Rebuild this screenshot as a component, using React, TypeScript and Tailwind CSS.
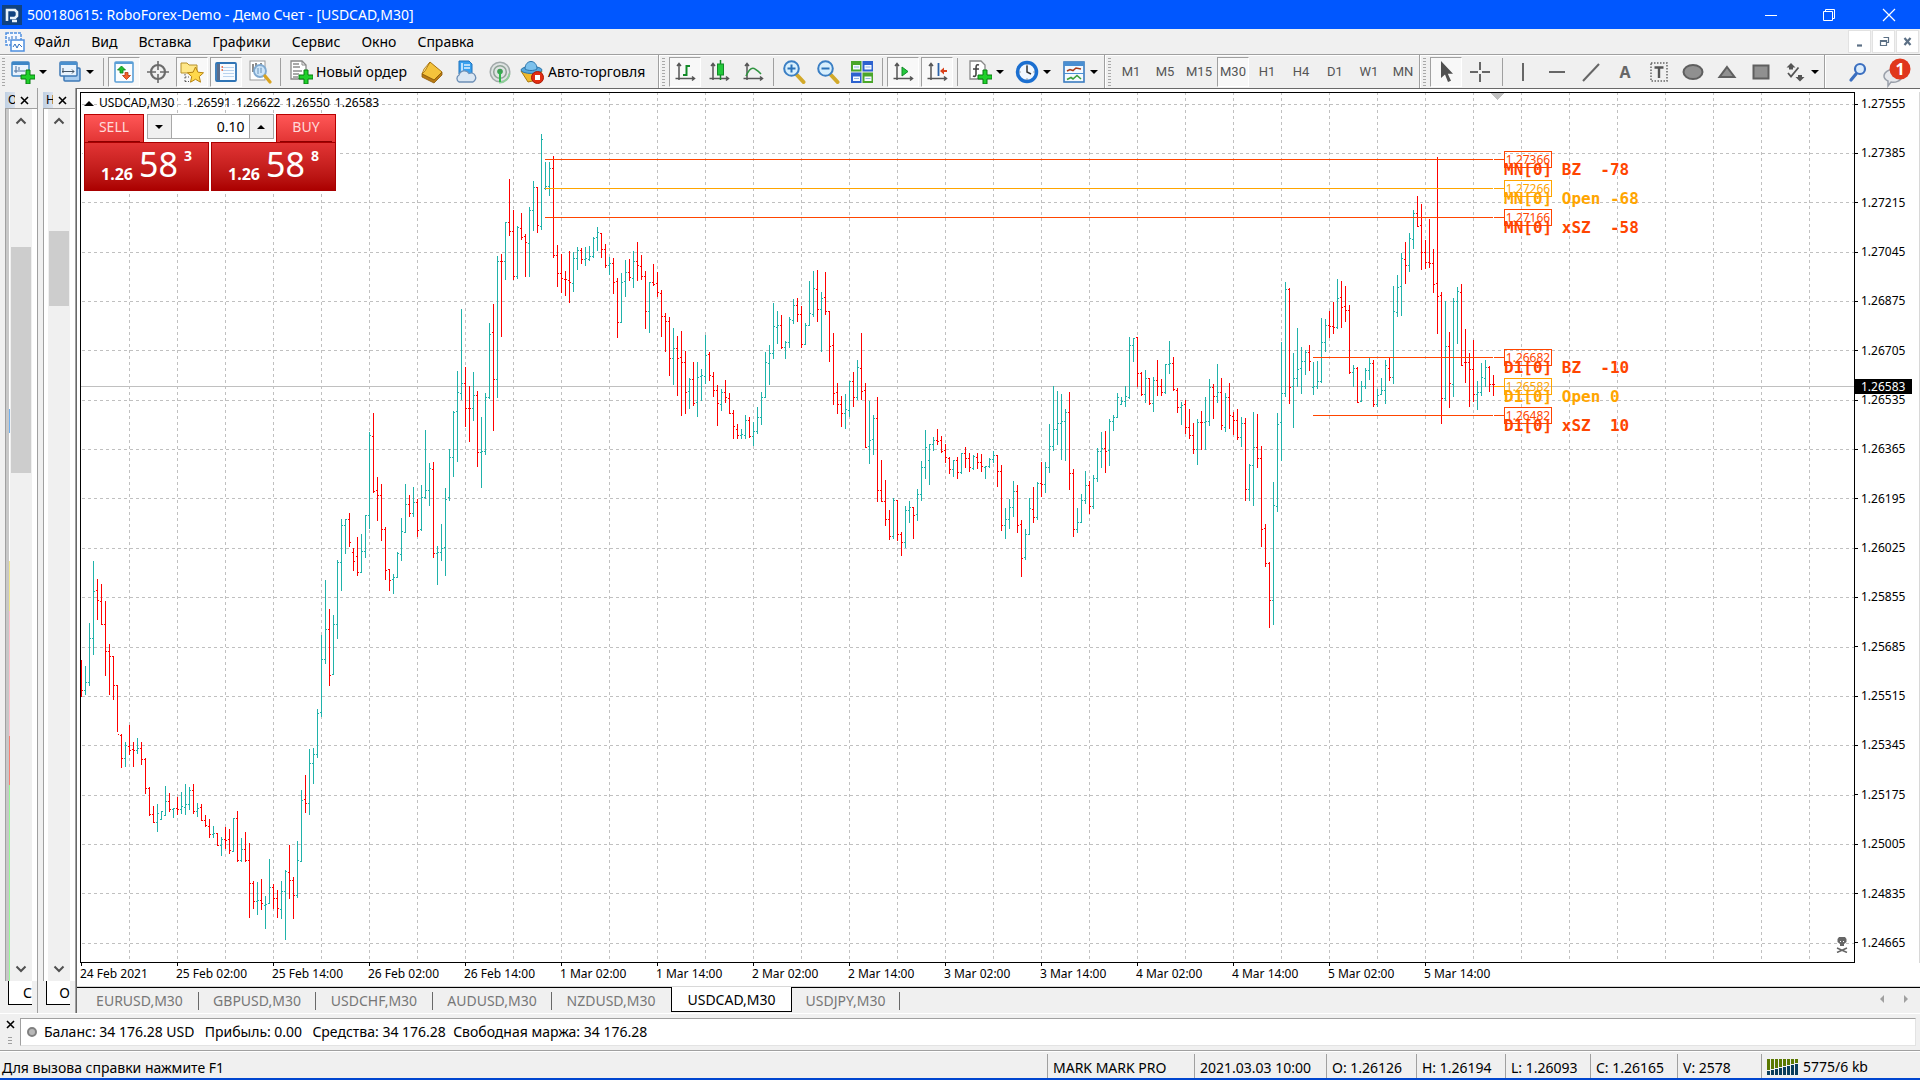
import React from "react";

const UI = "font-['Noto_Sans','Open_Sans',sans-serif]";

/* One bar per entry: high low open close, in plot units. Bars are 4 units apart. */
const BARS = `660 697 680 690|666 695 690 682|623 686 682 638|561 655 638 591|579 620 590 600|584 625 601 624|601 676 624 651|644 695 651 656|656 700 656 685|685 732 685 734|734 768 735 758|742 767 758 745|725 755 746 750|742 767 749 750|738 754 750 748|742 765 748 759|758 794 759 788|787 816 788 814|806 823 814 822|804 832 822 813|811 820 819 811|786 816 815 801|793 812 801 809|808 818 809 808|797 815 808 809|792 814 809 806|784 815 807 804|787 810 804 790|784 814 790 811|803 817 811 808|804 821 807 820|815 827 820 825|819 838 826 834|826 838 834 833|833 846 833 845|837 856 845 839|827 849 839 840|829 854 839 850|818 852 851 818|811 862 818 860|838 862 860 849|832 862 849 860|843 918 860 883|881 909 883 901|882 915 901 900|879 910 900 903|896 929 905 904|859 904 903 887|884 909 887 898|890 918 898 908|881 919 909 891|870 940 891 871|845 899 872 880|877 919 880 895|841 898 895 860|790 862 861 800|775 813 799 803|749 815 803 763|748 784 763 754|709 758 754 713|635 717 712 659|580 664 659 629|609 686 629 675|615 675 674 624|560 639 624 562|519 591 562 525|519 554 525 519|513 547 519 542|548 571 552 561|537 576 556 572|534 573 572 551|515 558 551 515|432 529 515 435|413 493 436 491|477 521 490 495|484 541 495 529|527 580 529 570|569 591 569 580|574 594 579 577|552 578 577 553|518 561 554 531|484 533 532 504|495 517 504 513|487 517 513 502|499 537 502 530|485 531 529 497|430 499 497 490|463 506 490 468|462 558 469 553|546 585 553 552|524 561 552 548|488 576 547 499|449 501 497 457|411 477 457 412|371 462 411 392|309 400 393 383|367 427 383 408|386 442 408 408|372 421 408 395|391 467 395 452|417 488 452 451|393 455 451 397|323 399 397 334|304 431 332 379|256 398 379 261|254 337 261 261|222 280 261 222|179 236 222 231|210 280 231 276|226 279 276 227|213 240 228 237|234 277 236 242|207 277 243 210|181 231 210 187|187 233 187 225|134 230 226 139|162 190 188 186|162 196 186 168|156 258 168 255|245 287 255 273|254 293 273 278|271 296 279 279|251 303 280 282|252 292 283 258|247 270 258 250|248 264 250 259|247 266 259 258|246 261 259 256|237 258 256 238|227 251 237 232|233 258 233 249|244 268 249 265|257 275 265 263|258 294 263 282|278 338 281 322|273 323 322 282|260 297 281 272|259 281 272 277|251 288 278 261|242 281 261 265|255 280 266 276|271 329 276 311|282 333 311 282|264 286 282 284|272 297 283 292|290 337 293 316|313 352 316 321|317 376 321 358|328 385 358 348|336 396 348 358|331 416 357 362|351 414 362 392|378 409 391 379|362 406 379 403|362 417 402 377|369 401 376 375|335 384 376 355|352 381 354 375|372 397 376 390|385 426 390 403|389 411 404 392|380 403 392 397|393 414 398 413|410 439 413 426|424 439 429 435|429 439 435 434|415 439 435 420|417 438 420 436|422 446 436 431|407 434 431 417|392 425 417 397|352 398 397 362|345 385 363 353|303 359 353 326|311 344 327 325|315 349 325 347|341 359 347 342|317 348 342 319|299 324 320 305|298 322 305 314|306 348 314 344|323 345 344 325|281 326 325 313|271 317 314 288|270 322 289 309|292 352 309 298|272 315 297 311|311 362 311 346|333 405 345 393|383 414 392 404|396 427 404 413|394 429 413 409|381 417 410 381|372 407 381 397|360 400 397 367|333 400 368 391|383 448 390 447|401 464 446 440|415 455 439 418|397 502 418 490|460 502 490 501|480 526 501 519|510 540 519 536|498 539 536 500|500 541 500 534|532 556 534 542|506 548 542 510|501 523 510 507|507 539 507 515|489 521 514 494|461 501 494 467|430 479 467 447|444 485 460 444|437 451 444 440|429 445 440 441|436 453 440 451|444 463 450 457|457 474 458 469|460 477 469 460|457 479 460 472|453 474 472 453|447 468 453 458|453 472 458 467|455 470 468 456|453 469 457 462|454 472 462 466|466 479 467 466|458 468 466 459|451 463 459 455|455 487 455 471|465 531 471 525|508 539 525 519|499 529 519 507|481 517 507 491|485 533 491 525|520 577 524 558|529 560 557 534|498 535 534 508|487 523 509 517|482 520 517 483|462 497 483 484|462 493 484 467|424 473 467 446|386 451 446 429|391 445 429 423|394 460 423 421|409 461 421 412|392 490 412 473|469 537 473 529|508 533 529 522|494 523 522 500|471 504 500 485|481 514 485 506|475 509 506 478|448 482 478 451|432 468 451 448|431 473 448 451|419 466 450 421|415 431 421 417|393 418 417 397|397 405 404 401|386 407 401 396|337 399 397 345|338 362 345 338|337 387 337 373|372 396 373 394|370 403 394 378|378 405 378 403|377 412 403 380|360 396 380 386|379 396 386 392|364 394 392 364|341 374 364 363|357 391 363 389|388 413 390 407|402 425 407 405|400 434 404 427|409 439 427 435|423 454 435 449|419 465 449 422|411 450 422 422|397 450 422 421|379 426 421 387|384 419 387 396|364 403 396 392|378 430 392 425|393 432 427 397|383 429 397 415|412 435 416 420|409 440 420 437|417 447 437 423|418 501 423 489|464 501 489 465|412 506 465 447|414 468 447 458|446 547 458 529|524 567 528 563|562 628 563 600|482 625 600 505|413 512 506 424|342 461 422 393|282 397 393 289|288 404 289 387|353 428 386 378|328 387 378 369|347 394 368 361|350 375 361 352|345 371 352 361|362 395 387 386|361 389 386 381|318 383 381 342|319 352 342 325|311 338 325 326|302 334 326 327|279 329 327 298|281 328 297 307|286 322 306 310|305 374 310 372|365 387 372 368|367 403 368 402|381 402 401 386|368 389 386 370|357 380 370 363|360 407 363 404|389 407 404 395|378 395 394 390|360 404 390 365|358 381 368 377|286 384 377 311|275 317 312 287|253 316 286 258|242 284 259 265|233 272 265 238|210 249 239 213|196 227 213 226|204 270 225 252|240 269 252 262|219 268 262 263|249 293 263 284|157 334 283 296|292 424 295 398|301 401 398 346|332 408 346 383|298 397 384 301|287 344 301 291|284 366 292 365|329 383 362 362|353 407 362 369|340 402 369 394|381 410 394 392|363 396 392 377|360 387 378 367|366 392 367 384|375 396 384 384`
  .split("|")
  .map((b) => b.split(" ").map(Number));

const barPath = (down: boolean) =>
  BARS.map(([h, l, o, c], i) => {
    if (c >= o !== down) return "";
    const x = 81 + i * 4;
    const left = i ? `M${x - 1} ${o}h1v1h-1z` : "";
    return `M${x} ${h}h1V${l}h-1z${left}M${x + 1} ${c}h1v1h-1z`;
  }).join("");

const GRID_Y = [104, 153, 202, 252, 301, 350, 400, 449, 498, 548, 597, 647, 696, 745, 795, 844, 893, 943];
const GRID_X = Array.from({ length: 36 }, (_, i) => 129 + i * 48);
const PRICES = ["1.27555", "1.27385", "1.27215", "1.27045", "1.26875", "1.26705", "1.26535", "1.26365", "1.26195", "1.26025", "1.25855", "1.25685", "1.25515", "1.25345", "1.25175", "1.25005", "1.24835", "1.24665"];
const TIMES = ["24 Feb 2021", "25 Feb 02:00", "25 Feb 14:00", "26 Feb 02:00", "26 Feb 14:00", "1 Mar 02:00", "1 Mar 14:00", "2 Mar 02:00", "2 Mar 14:00", "3 Mar 02:00", "3 Mar 14:00", "4 Mar 02:00", "4 Mar 14:00", "5 Mar 02:00", "5 Mar 14:00"];
const LEVELS = [
  { y: 159, price: "1.27366", text: "MN[0] BZ  -78", color: "#ff4500", from: 545 },
  { y: 188, price: "1.27266", text: "MN[0] Open -68", color: "#ffa500", from: 545 },
  { y: 217, price: "1.27166", text: "MN[0] xSZ  -58", color: "#ff4500", from: 545 },
  { y: 357, price: "1.26682", text: "D1[0] BZ  -10", color: "#ff4500", from: 1313 },
  { y: 386, price: "1.26582", text: "D1[0] Open 0", color: "#ffa500", from: 1493 },
  { y: 415, price: "1.26482", text: "D1[0] xSZ  10", color: "#ff4500", from: 1313 },
];
const TABS = [
  { name: "EURUSD,M30", cls: "w-[118px] border-[#696969]" },
  { name: "GBPUSD,M30", cls: "w-[117px] border-[#696969]" },
  { name: "USDCHF,M30", cls: "w-[117px] border-[#696969]" },
  { name: "AUDUSD,M30", cls: "w-[119px] border-[#696969]" },
  { name: "NZDUSD,M30", cls: "w-[119px] border-transparent" },
  { name: "USDCAD,M30", cls: "" },
  { name: "USDJPY,M30", cls: "w-[108px] border-[#696969]" },
];

function Plot() {
  return (
    <svg className="absolute inset-0 h-full w-full" viewBox="81 93 1773 869" preserveAspectRatio="none" shapeRendering="crispEdges" role="img" aria-label="USDCAD,M30">
      <g stroke="#c0c0c0" strokeWidth="1">
        {GRID_X.map((x) => <path key={x} d={`M${x + 0.5} 959V93`} strokeDasharray="3 3" />)}
        {GRID_Y.map((y) => <path key={y} d={`M82 ${y + 0.5}H1854`} strokeDasharray="3 3" />)}
        <path d="M81 386.5H1854" />
      </g>
      <path d="M1490 93h15l-7.500 7z" fill="#c0c0c0" />
      <path d={barPath(false)} fill="#20b2aa" />
      <path d={barPath(true)} fill="#ff0000" />
      {LEVELS.map((l) => (
        <path key={l.y} d={`M${l.from} ${l.y + 0.5}H1493M1494 ${l.y + 0.5}H1504`} stroke={l.color} />
      ))}
    </svg>
  );
}

/* ---------- icons ---------- */
type IconProps = { children: React.ReactNode; size?: string };
const Svg = ({ children, size = "size-6" }: IconProps) => (
  <svg viewBox="0 0 24 24" className={`${size} shrink-0`} fill="none" aria-hidden="true">{children}</svg>
);
const plus = <path d="M15 10h4v5h5v4h-5v5h-4v-5h-5v-4h5z" fill="#1fd02a" stroke="#087d12" />;
const axes = <path d="M6 4v16M2.500 18.500H21M4 6l2-2.500L8 6M19 16.500l2.500 2L19 20.500" stroke="#555" strokeWidth="1.500" />;

const NewChart = () => <Svg><rect x="1" y="2" width="17" height="14" rx="1" fill="#e9f3fd" stroke="#3d86c6" strokeWidth="1.500" /><path d="M1 3.500h17" stroke="#3d86c6" strokeWidth="3" /><path d="M5 6v7M3 11h11M8 7v3" stroke="#4a6f99" />{plus}</Svg>;
const Profiles = () => <Svg><rect x="6" y="8" width="16" height="13" rx="1" fill="#a9cdf0" stroke="#3d78b5" strokeWidth="1.500" /><rect x="2" y="2" width="17" height="14" rx="1" fill="#e9f3fd" stroke="#3d78b5" strokeWidth="1.500" /><path d="M2 3.500h17" stroke="#4a90cf" strokeWidth="3" /><path d="M5 8v5M4 11.500h12M14 9.500l2 2-2 2" stroke="#456" /></Svg>;
const Market = () => <Svg><rect x="3" y="2" width="18" height="20" rx="1" fill="#fbfdff" stroke="#5b9fd6" strokeWidth="1.600" /><path d="M3 3h18" stroke="#5b9fd6" strokeWidth="2" /><path d="M9.500 6l4 4H11v3H8v-3H5.500z" fill="#1fbf2c" stroke="#0c7c16" strokeWidth=".8" /><path d="M14.500 19.500l4-4H16v-3h-3v3h-2.500z" fill="#f4622a" stroke="#b5360c" strokeWidth=".8" /></Svg>;
const Cross = () => <Svg><circle cx="12" cy="12" r="7" stroke="#6b6b6b" strokeWidth="2.200" /><path d="M12 1v9M12 14v9M1 12h9M14 12h9" stroke="#6b6b6b" strokeWidth="1.600" /></Svg>;
const Navigator = () => <Svg><path d="M1 3h6l2 2h8v8H1z" fill="#ffe788" stroke="#b7912a" /><path d="M5 14v8M5 17h4M5 21.500h4" stroke="#555" strokeDasharray="1.500 1.500" /><path d="M15.500 7l2.400 5.200 5.600.6-4.200 3.800 1.200 5.600-5-2.900-5 2.900 1.200-5.600-4.200-3.800 5.600-.6z" fill="#ffd84a" stroke="#b98512" /></Svg>;
const Terminal = () => <Svg><rect x="2" y="3" width="20" height="18" rx="1" fill="#f7fbff" stroke="#2f74b5" strokeWidth="1.800" /><path d="M4.500 4v16" stroke="#5a6d8c" strokeWidth="3" /><path d="M9 7.500h11M9 10.500h11M9 13.500h11M9 16.500h11" stroke="#b9d3ee" /><path d="M7.500 7h1.500M7.500 10h1.500" stroke="#e0502a" strokeWidth="1.500" /></Svg>;
const Tester = () => <Svg><rect x="2" y="1" width="15" height="19" fill="#fff" stroke="#9a9a9a" /><path d="M5 4v8M8 3v6M13 3v6" stroke="#666" strokeWidth="1.500" /><circle cx="12" cy="11" r="6" fill="#c6e2fa" fillOpacity=".9" stroke="#7fa9d0" strokeWidth="1.800" /><path d="M10 8v6M13 8v5" stroke="#6b94bb" /><path d="M17 16l5 6" stroke="#d9a320" strokeWidth="3.200" strokeLinecap="round" /></Svg>;
const Order = () => <Svg><path d="M2 1h11l4 4v14H2z" fill="#fff" stroke="#888" strokeWidth="1.300" /><path d="M13 1v4h4" stroke="#888" /><path d="M4 4h6M4 7h7M4 11h9M4 14h6M4 17h5" stroke="#555" strokeWidth="1.200" />{plus}</Svg>;
const Book = () => <Svg><path d="M10 2l12 10-8 8L2 14z" fill="#f4c33c" stroke="#a8730d" /><path d="M10 2L4 9l-2 5 3-3z" fill="#fbe08b" stroke="#a8730d" strokeWidth=".8" /><path d="M2 14l12 6 8-8v3l-8 8-12-6z" fill="#b97a13" stroke="#8b5a08" strokeWidth=".8" /></Svg>;
const Signals = () => <Svg><path d="M5 1h10l3 3v10H5z" fill="#38a0ee" stroke="#1f73bd" /><path d="M8 3v10M10 5h6M10 8h6" stroke="#dff1ff" strokeWidth="1.600" /><path d="M5 22a4 4 0 010-7 5.500 5.500 0 0110-1.500A4.200 4.200 0 1119 22z" fill="#dbe7f3" stroke="#6d8fb5" strokeWidth="1.300" /></Svg>;
const Radio = () => <Svg><circle cx="12" cy="12" r="9.800" fill="#dfe3e3" stroke="#a2aaaa" strokeWidth="1.500" /><circle cx="12" cy="12" r="6.300" stroke="#8fa396" strokeWidth="1.500" /><path d="M12 12v10.500c5-.5 9-4 9.500-9" stroke="#8fce9a" strokeWidth="2" /><circle cx="12" cy="11.500" r="2.800" fill="#3f9f55" /><path d="M12 12v10" stroke="#2fb84a" strokeWidth="2" /></Svg>;
const AutoTrade = () => <Svg><path d="M1 11l7 11 9-2 5-9z" fill="#f0b92c" stroke="#a6790f" /><ellipse cx="11.500" cy="10" rx="10.500" ry="3.500" fill="#58a8dc" stroke="#2b74aa" /><path d="M5 9c0-10 12-10 12 0-3 2-9 2-12 0z" fill="#7cc1ec" stroke="#2b74aa" /><circle cx="17.500" cy="17.500" r="6" fill="#e32d12" stroke="#a81a05" /><rect x="15" y="15" width="5" height="5" fill="#fff" /></Svg>;
const BarsIcon = () => <Svg>{axes}<path d="M13.500 5v11M13.500 6H17M10 15h3.500" stroke="#128a28" strokeWidth="2" /></Svg>;
const Candles = () => <Svg>{axes}<path d="M13.500 0v20" stroke="#128a28" strokeWidth="1.500" /><rect x="10.500" y="4" width="6" height="11" fill="#22c93a" stroke="#128a28" /></Svg>;
const LineIcon = () => <Svg>{axes}<path d="M5 16c5-11 8-9 15-2" stroke="#2f9440" strokeWidth="1.600" /></Svg>;
const Zoom = ({ minus = false }) => <Svg><path d="M15 15l6.500 7" stroke="#d2a92a" strokeWidth="4" strokeLinecap="round" /><circle cx="9.500" cy="8.500" r="7.300" fill="#d7effd" stroke="#3b7fc4" strokeWidth="2" /><path d={minus ? "M5.500 8.500h8" : "M5.500 8.500h8M9.500 4.500v8"} stroke="#2b72b8" strokeWidth="2" /></Svg>;
const Tile = () => <Svg><rect x="1" y="1" width="10.500" height="10.500" fill="#4aa62a" /><rect x="12.500" y="1" width="10.500" height="10.500" fill="#2d62cf" /><rect x="1" y="12.500" width="10.500" height="10.500" fill="#2d62cf" /><rect x="12.500" y="12.500" width="10.500" height="10.500" fill="#4aa62a" /><path d="M3 5h7v4.500H3zM14.500 5h7v4.500h-7zM3 16.500h7V21H3zM14.500 16.500h7V21h-7z" fill="#f6faff" /><path d="M4 7h5M15.500 7h5M4 18.500h5M15.500 18.500h5" stroke="#8fb4e0" /></Svg>;
const AutoScroll = () => <Svg>{axes}<path d="M11 7l6 4.500-6 4.500z" fill="#25c93c" stroke="#128a28" /></Svg>;
const Shift = () => <Svg>{axes}<path d="M13.500 3v13" stroke="#2b62a8" strokeWidth="1.800" /><path d="M15 11l4-3.500V10h3v2h-3v2.500z" fill="#d9421b" /></Svg>;
const Indicators = () => <Svg><path d="M2 1h11l4 4v14H2z" fill="#fff" stroke="#888" strokeWidth="1.300" /><path d="M11 5c-3-1-3 1-3 4v5c0 2-1 3-3 2M5 9h6" stroke="#444" strokeWidth="1.600" />{plus}</Svg>;
const Clock = () => <Svg><circle cx="12" cy="12" r="9.500" fill="#f2f8ff" stroke="#1b6fd0" strokeWidth="3.500" /><path d="M12 5.500V12l4 2" stroke="#333" strokeWidth="1.500" /><path d="M12 4.500v1M12 18.500v1M4.500 12h1M18.500 12h1" stroke="#555" /></Svg>;
const Template = () => <Svg><rect x="2" y="2" width="20" height="20" fill="#f4faff" stroke="#3b7cc0" strokeWidth="1.600" /><path d="M2 4h20" stroke="#4a8fd2" strokeWidth="4" /><path d="M5 11l3-1.500 3 1L14 8l5 1" stroke="#a93a1a" strokeWidth="1.600" /><path d="M2 13.500h20" stroke="#4a8fd2" /><path d="M5 19.500l4-2 2 1.500 4-3.500 4 3.500" stroke="#3aa03a" strokeWidth="1.600" /></Svg>;
const Cursor = () => <Svg><path d="M7 1v17l4-3.500 3 7.500 3-1.300-3.200-7H19z" fill="#505050" /></Svg>;
const Crosshair = () => <Svg><path d="M12 2v8M12 14v8M2 12h8M14 12h8" stroke="#666" strokeWidth="2" /></Svg>;
const VLine = () => <Svg><path d="M12 3v18" stroke="#666" strokeWidth="2" /></Svg>;
const HLine = () => <Svg><path d="M4 12h16" stroke="#666" strokeWidth="2" /></Svg>;
const Trend = () => <Svg><path d="M4 21L20 4" stroke="#666" strokeWidth="2" /></Svg>;
const TextLabel = () => <Svg><rect x="4" y="3" width="16" height="18" stroke="#666" strokeWidth="1.500" strokeDasharray="1.500 1.500" /><path d="M7.500 7.500h9M12 7.500V18" stroke="#555" strokeWidth="2.400" /></Svg>;
const Ellipse = () => <Svg><ellipse cx="12" cy="12" rx="9.500" ry="7" fill="#909090" stroke="#5f5f5f" strokeWidth="2" /></Svg>;
const Triangle = () => <Svg><path d="M12 7l7.500 10h-15z" fill="#909090" stroke="#5f5f5f" strokeWidth="2" /></Svg>;
const Rect = () => <Svg><rect x="4.500" y="5.500" width="15" height="13" fill="#909090" stroke="#5f5f5f" strokeWidth="2" /></Svg>;
const Arrows = () => <Svg><path d="M8 3l4.500 4.500h-2.500v2H6v-2H3.500zM17 21.500l-4.500-4.500h2.500v-2h4v2h2.500z" fill="#555" /><path d="M5 13l3 3.500 7.500-9" stroke="#555" strokeWidth="1.800" /></Svg>;
const Search = () => <Svg><path d="M10 14l-5 6" stroke="#3b6fc0" strokeWidth="3.200" strokeLinecap="round" /><circle cx="14" cy="9" r="5" fill="#dcecfb" stroke="#3b6fc0" strokeWidth="2.200" /></Svg>;

/* ---------- toolbar parts ---------- */
const Grip = ({ tight = false }) => <div className={`${tight ? "mr-0" : "mr-1"} ml-0.5 h-7 w-[3px] shrink-0 bg-[repeating-linear-gradient(to_bottom,#a8a8a8_0_1px,transparent_1px_3px)]`} />;
const Sep = () => <div className="mx-1 h-7 w-px shrink-0 bg-[#a0a0a0]" />;
const Edge = () => <div className="h-full w-[2px] shrink-0 border-l border-[#a0a0a0] bg-white" />;
const Caret = () => <span className="h-0 w-0 border-x-4 border-t-4 border-x-transparent border-t-black" />;

function Tool({ label, children, pressed = false, w = "w-8" }: { label: string; children: React.ReactNode; pressed?: boolean; w?: string }) {
  return (
    <button
      aria-label={label}
      aria-pressed={pressed}
      className={`${w} flex h-[30px] shrink-0 items-center justify-center border ${pressed ? "border-t-[#a0a0a0] border-r-white border-b-white border-l-[#a0a0a0] bg-[#f8f8f8]" : "border-transparent"}`}
    >
      {children}
    </button>
  );
}

function Drop({ label, children }: { label: string; children: React.ReactNode }) {
  return (
    <button aria-label={label} aria-haspopup="menu" className="flex h-[30px] w-[47px] shrink-0 items-center justify-center gap-1">
      {children}
      <Caret />
    </button>
  );
}

const Chevron = ({ down = false }) => (
  <svg viewBox="0 0 12 8" className="h-2 w-3" aria-hidden="true">
    <path d={down ? "M1.500 1.500L6 6l4.500-4.500" : "M1.500 6.500L6 2l4.500 4.500"} fill="none" stroke="#505050" strokeWidth="2" />
  </svg>
);
const Cx = () => (
  <svg viewBox="0 0 9 9" className="size-[9px]" aria-hidden="true"><path d="M1 1l7 7M8 1L1 8" stroke="#000" strokeWidth="1.600" /></svg>
);

function SidePanel({ title, tab, strip, thumb }: { title: string; tab: string; strip?: boolean; thumb: string }) {
  return (
    <section className="flex w-[38px] shrink-0 flex-col border-r border-[#a0a0a0] bg-[#f0f0f0] pt-1 pl-[5px]">
      <header className="flex h-4 items-center justify-between pr-2">
        <span className="h-4 w-2.5 overflow-hidden bg-linear-to-r from-[#bfcfe2] to-[#dbe3ee] pl-[3px] text-xs leading-4">{title}</span>
        <button aria-label="Закрыть"><Cx /></button>
      </header>
      <div className="flex min-h-0 flex-1 border-t border-l border-[#a0a0a0] bg-white">
        {strip ? (
          <div className="flex w-1 flex-col border-l-[3px] border-[#c8c8c8] pt-[300px]">
            <i className="h-[24px] bg-[#6fb0f0]" />
            <i className="mt-[128px] h-[50px] bg-[#f0e68c]" />
            <i className="h-[125px] bg-[#ffc0cb]" />
            <i className="h-[49px] bg-[#fa8072]" />
            <i className="flex-1 bg-[#98fb98]" />
          </div>
        ) : (
          <div className="w-1" />
        )}
        <div className="flex w-[22px] flex-col items-center bg-[#f0f0f0] py-2">
          <Chevron />
          <div className={`${thumb} w-5 bg-[#cdcdcd]`} />
          <div className="flex-1" />
          <Chevron down />
        </div>
      </div>
      <footer className="ml-[3px] flex h-6 w-[24px] items-center justify-end overflow-hidden border-b border-l border-black bg-white text-sm leading-none">{tab}</footer>
      <div className="h-2" />
    </section>
  );
}

function Quote({ big, small, pip }: { big: string; small: string; pip: string }) {
  return (
    <div className="flex h-[49px] flex-1 justify-center gap-1.5 border border-[#a80000] bg-linear-to-b from-[#e23434] to-[#ab0000] leading-none text-white">
      <span className="pt-[23px] text-base leading-none font-bold">{small}</span>
      <span className="pt-[3px] text-[34px] leading-9">{big}</span>
      <span className="pt-1.5 text-sm leading-none font-bold">{pip}</span>
    </div>
  );
}

const OrderSide = ({ children }: { children: string }) => (
  <button className="h-7 w-[60px] border border-b-0 border-[#b80000] bg-linear-to-b from-[#ff5656] to-[#e23434] px-[3px] text-sm text-[#ffdada]">
    <span className="block h-full border-b border-[#8c0000] leading-6">{children}</span>
  </button>
);

export default function App() {
  return (
    <div className={`${UI} flex h-screen flex-col overflow-hidden bg-[#f0f0f0] text-black`}>
      <header className="flex h-[29px] shrink-0 items-center bg-[#0057ff] pl-0.5 text-white">
        <svg viewBox="0 0 20 20" className="mr-[5px] size-5" aria-hidden="true"><rect width="20" height="20" fill="#10427f" /><path d="M5 16V5h8l2 2v4l-2 2H8M10 16h5" fill="none" stroke="#e8f2fa" strokeWidth="2.600" /></svg>
        <h1 className="flex-1 text-sm">500180615: RoboForex-Demo - Демо Счет - [USDCAD,M30]</h1>
        <div className="flex">
          <button aria-label="Свернуть" className="flex w-[58px] items-center justify-center"><svg viewBox="0 0 14 14" className="size-3.5"><path d="M1 7.500h12" stroke="#fff" /></svg></button>
          <button aria-label="Восстановить" className="flex w-[58px] items-center justify-center"><svg viewBox="0 0 14 14" className="size-3.5"><path d="M1.500 3.500h9v9h-9zM3.500 3.500v-2h9v9h-2" fill="none" stroke="#fff" /></svg></button>
          <button aria-label="Закрыть" className="flex w-[62px] items-center justify-center"><svg viewBox="0 0 14 14" className="size-3.5"><path d="M1 1l12 12M13 1L1 13" stroke="#fff" strokeWidth="1.200" /></svg></button>
        </div>
      </header>

      <nav className="flex h-[25px] shrink-0 items-center pl-[5px] text-sm">
        <svg viewBox="0 0 20 20" className="mr-[9px] size-5" aria-hidden="true"><rect x="1" y="1" width="15" height="12" fill="#f4f8ff" stroke="#4d8fe0" strokeDasharray="3 1" strokeWidth="1.500" /><rect x="6" y="8" width="13" height="11" fill="#fff" stroke="#4d8fe0" strokeWidth="1.500" /><path d="M4 5v4M7 4v3M11 4v3M8 15l2-3 2 4 2-4 3 3" fill="none" stroke="#2f6fc0" /></svg>
        <div className="flex flex-1 gap-[21px]">
          {["Файл", "Вид", "Вставка", "Графики", "Сервис", "Окно", "Справка"].map((m) => <button key={m}>{m}</button>)}
        </div>
        <div className="flex gap-px pr-px">
          {["M3 9.500h5", "M5.500 1.500h5v5h-2M2.500 4.500h6v5h-6zM3 5.500h5", "M2.500 2l6 7M8.500 2l-6 7"].map((d, i) => (
            <button key={d} aria-label={["Свернуть окно", "Восстановить окно", "Закрыть окно"][i]} className="flex h-[23px] w-[23px] items-center justify-center border border-[#e2e2e2] bg-white">
              <svg viewBox="0 0 12 12" className="size-3"><path d={d} fill="none" stroke="#5c7085" strokeWidth={i === 1 ? 1.2 : 2.2} /></svg>
            </button>
          ))}
        </div>
      </nav>

      <div role="toolbar" className="flex h-[34px] shrink-0 items-center border-t border-[#a0a0a0] shadow-[inset_0_1px_#fff]">
        <div className="flex h-full w-[658px] items-center">
          <Grip tight />
          <Drop label="Новый график"><NewChart /></Drop>
          <Drop label="Профили"><Profiles /></Drop>
          <Sep />
          <div className="flex gap-0.5">
            <Tool label="Обзор рынка" pressed><Market /></Tool>
            <Tool label="Окно данных"><Cross /></Tool>
            <Tool label="Навигатор" pressed><Navigator /></Tool>
            <Tool label="Терминал" pressed><Terminal /></Tool>
            <Tool label="Тестер"><Tester /></Tool>
          </div>
          <Sep />
          <button className="ml-1 flex h-[30px] items-center gap-[3px] text-sm whitespace-nowrap"><Order />Новый ордер</button>
          <div className="ml-[9px] flex items-center gap-0.5">
            <Tool label="MetaEditor"><Book /></Tool>
            <Tool label="Маркет"><Signals /></Tool>
            <Tool label="Сигналы"><Radio /></Tool>
            <button className="ml-0.5 flex h-[30px] items-center gap-1 text-sm whitespace-nowrap"><AutoTrade />Авто-торговля</button>
          </div>
        </div>
        <Edge />
        <div className="flex h-full w-[444px] items-center">
          <Grip />
          <div className="flex gap-0.5">
            <Tool label="Бары" pressed><BarsIcon /></Tool>
            <Tool label="Свечи"><Candles /></Tool>
            <Tool label="Линия"><LineIcon /></Tool>
          </div>
          <Sep />
          <div className="flex gap-0.5">
            <Tool label="Увеличить"><Zoom /></Tool>
            <Tool label="Уменьшить"><Zoom minus /></Tool>
            <Tool label="Расположить окна"><Tile /></Tool>
          </div>
          <Sep />
          <div className="flex gap-0.5">
            <Tool label="Автопрокрутка" pressed><AutoScroll /></Tool>
            <Tool label="Сдвиг графика" pressed><Shift /></Tool>
          </div>
          <Sep />
          <Drop label="Индикаторы"><Indicators /></Drop>
          <Drop label="Периоды"><Clock /></Drop>
          <Drop label="Шаблоны"><Template /></Drop>
        </div>
        <Edge />
        <div className="flex h-full w-[313px] items-center font-['Roboto',sans-serif] text-[13px] text-[#555]">
          <Grip />
          <div className="flex flex-1 gap-0.5">
            {["M1", "M5", "M15", "M30", "H1", "H4", "D1", "W1", "MN"].map((p) => <Tool key={p} label={p} pressed={p === "M30"}>{p}</Tool>)}
          </div>
        </div>
        <Edge />
        <div className="flex h-full w-[403px] items-center">
          <Grip />
          <Tool label="Курсор" pressed><Cursor /></Tool>
          <Tool label="Перекрестие" w="w-9"><Crosshair /></Tool>
          <Sep />
          <div className="flex gap-0.5">
            <Tool label="Вертикальная линия"><VLine /></Tool>
            <Tool label="Горизонтальная линия"><HLine /></Tool>
            <Tool label="Трендовая линия"><Trend /></Tool>
            <Tool label="Текст"><span className="text-base font-bold text-[#666]">A</span></Tool>
            <Tool label="Текстовая метка"><TextLabel /></Tool>
            <Tool label="Эллипс"><Ellipse /></Tool>
            <Tool label="Треугольник"><Triangle /></Tool>
            <Tool label="Прямоугольник"><Rect /></Tool>
          </div>
          <Drop label="Стрелки"><Arrows /></Drop>
        </div>
        <Edge />
        <div className="flex flex-1 items-center justify-end gap-1.5 pr-2">
          <Tool label="Поиск"><Search /></Tool>
          <button aria-label="Уведомления" className="relative h-8 w-8">
            <svg viewBox="0 0 32 32" className="size-8" aria-hidden="true"><path d="M4 20c0-4 5-7 10-6s9 3 8 7-7 6-11 5l-3 4v-5c-2-1-4-2-4-5z" fill="#e6e8ec" stroke="#9aa0aa" strokeWidth="1.500" /><circle cx="20" cy="13" r="10.500" fill="#e0371c" /></svg>
            <span className="absolute top-[3px] left-[15px] w-2.5 text-center text-base leading-5 font-bold text-white">1</span>
          </button>
        </div>
      </div>

      <main className="flex min-h-0 flex-1">
        <SidePanel title="О" tab="С" strip thumb="mt-[122px] h-[226px]" />
        <SidePanel title="Н" tab="О" thumb="mt-[106px] h-[75px]" />
        <section className="flex min-w-0 flex-1 flex-col border-t border-l border-[#696969]">
          <div className="flex min-h-0 flex-1 flex-col border-b border-[#d8d8d8] bg-white pt-[3px] pl-[3px] text-xs">
            <div className="flex min-h-0 flex-1">
              <div className="relative min-w-0 flex-1 border border-black">
                <Plot />
                <div className="absolute top-0.5 left-[3px] flex items-center gap-[5px] leading-4 whitespace-pre">
                  <span className="h-0 w-0 border-x-[5px] border-b-[5px] border-x-transparent border-b-black" />
                  <span className="mr-1">USDCAD,M30 </span>
                  <span>1.26591</span><span>1.26622</span><span>1.26550</span><span>1.26583</span>
                </div>
                <div className="absolute top-[21px] left-0.5 w-[257px] bg-white pb-[3px] pl-px">
                  <div className="flex w-[252px] items-end justify-between">
                    <OrderSide>SELL</OrderSide>
                    <div className="mb-[3px] flex h-[25px] w-[127px] border border-[#a8a8a8] text-sm">
                      <button aria-label="Меньше" className="flex w-6 items-center justify-center border-r border-[#a8a8a8] bg-[#f0f0f0]"><Caret /></button>
                      <input aria-label="Объём" defaultValue="0.10" className="min-w-0 flex-1 bg-white pr-1 text-right" />
                      <button aria-label="Больше" className="flex w-6 items-center justify-center border-l border-[#a8a8a8] bg-[#f0f0f0]"><span className="rotate-180"><span className="block h-0 w-0 border-x-4 border-t-4 border-x-transparent border-t-black" /></span></button>
                    </div>
                    <OrderSide>BUY</OrderSide>
                  </div>
                  <div className="flex w-[252px] gap-0.5">
                    <Quote small="1.26" big="58" pip="3" />
                    <Quote small="1.26" big="58" pip="8" />
                  </div>
                </div>
                {LEVELS.map((l) => (
                  <div key={l.y} className="absolute left-[1423px] h-[17px]" style={{ top: l.y - 101, color: l.color }}>
                    <span className="block h-[17px] w-12 border border-current text-center leading-[15px]">{l.price}</span>
                    <span className="absolute top-[9px] left-0 font-['DejaVu_Sans_Mono',monospace] text-base leading-5 font-bold whitespace-pre">{l.text}</span>
                  </div>
                ))}
                <svg viewBox="0 0 12 16" className="absolute right-[6px] bottom-[9px] h-4 w-3" aria-label="Советник отключен"><path d="M3 0h6l1.500 2v3L8 7v2H4V7L1.500 5V2z" fill="#666" /><path d="M4 4.500h1M7 4.500h1" stroke="#fff" /><path d="M1 11l10 4.500M11 11L1 15.500" stroke="#666" strokeWidth="1.500" /></svg>
              </div>
              <div className="relative flex w-[65px] shrink-0 flex-col justify-between border-r border-[#d8d8d8] pt-1 pb-3">
                {PRICES.map((p) => (
                  <div key={p} className="flex h-4 items-center leading-4"><i className="mr-[3px] h-px w-[3px] bg-black" />{p}</div>
                ))}
                <div className="absolute top-[287px] left-0 h-[15px] w-[57px] bg-black pl-1.5 leading-[15px] text-white">1.26583</div>
              </div>
            </div>
            <div className="flex h-[23px] pl-px">
              {TIMES.map((t) => (
                <div key={t} className="w-24 shrink-0 whitespace-nowrap"><i className="block h-[3px] w-px bg-black" /><span className="-ml-px block leading-4">{t}</span></div>
              ))}
            </div>
          </div>
          <div role="tablist" className="flex h-[26px] shrink-0 items-start border-t border-black bg-[#f0f0f0] pl-1 text-sm text-[#777]">
            {TABS.map((t) =>
              t.name === "USDCAD,M30" ? (
                <button key={t.name} role="tab" aria-selected="true" className="-mt-px h-[25px] w-[121px] border-x border-b border-black bg-white pt-0.5 text-black">{t.name}</button>
              ) : (
                <button key={t.name} role="tab" aria-selected="false" className={`${t.cls} mt-1 h-[18px] border-r leading-[18px]`}>{t.name}</button>
              ),
            )}
            <div className="flex flex-1 items-center justify-end gap-5 self-stretch pr-3 pb-1">
              <span className="border-y-4 border-r-4 border-y-transparent border-r-[#a0a0a0]" />
              <span className="border-y-4 border-l-4 border-y-transparent border-l-[#a0a0a0]" />
            </div>
          </div>
        </section>
      </main>

      <section className="flex h-[37px] shrink-0 border-t border-white pt-1 pr-1 pb-1">
        <div className="flex w-5 flex-col items-center gap-2 pt-0.5">
          <button aria-label="Закрыть терминал"><Cx /></button>
          <i className="h-2 w-1 bg-[repeating-linear-gradient(to_bottom,#a0a0a0_0_1px,transparent_1px_3px)]" />
        </div>
        <div className="flex flex-1 items-center border border-t-[#a0a0a0] border-r-[#e3e3e3] border-b-[#e3e3e3] border-l-[#a0a0a0] bg-white pl-1.5 text-sm whitespace-pre">
          <span className="mr-[7px] size-2.5 rounded-full border-2 border-[#808080] bg-[#b8b8b8]" />
          <span className="mr-[3px]">Баланс: 34 176.28 USD  </span>
          <span className="mr-[3px]">Прибыль: 0.00  </span>
          <span>Средства: 34 176.28  Свободная маржа: 34 176.28</span>
        </div>
      </section>

      <footer className="flex h-[30px] shrink-0 items-end border-t border-b-2 border-t-[#a0a0a0] border-b-[#0046d0] text-sm shadow-[inset_0_1px_#fff]">
        <div className="flex h-6 flex-1 items-center pt-[3px] pl-0.5">Для вызова справки нажмите F1</div>
        <div className="flex h-6 w-[147px] items-center border-l border-[#a0a0a0] pt-[3px] pl-[5px]">MARK MARK PRO</div>
        <div className="flex h-6 w-[132px] items-center border-l border-[#a0a0a0] pt-[3px] pl-[5px]">2021.03.03 10:00</div>
        <div className="flex h-6 w-[90px] items-center border-l border-[#a0a0a0] pt-[3px] pl-[5px]">O: 1.26126</div>
        <div className="flex h-6 w-[89px] items-center border-l border-[#a0a0a0] pt-[3px] pl-[5px]">H: 1.26194</div>
        <div className="flex h-6 w-[85px] items-center border-l border-[#a0a0a0] pt-[3px] pl-[5px]">L: 1.26093</div>
        <div className="flex h-6 w-[87px] items-center border-l border-[#a0a0a0] pt-[3px] pl-[5px]">C: 1.26165</div>
        <div className="flex h-6 w-[84px] items-center border-l border-[#a0a0a0] pt-[3px] pl-[5px]">V: 2578</div>
        <div className="flex h-6 w-[159px] items-center gap-[5px] border-l border-[#a0a0a0] pt-[2px] pl-[5px]">
          <svg viewBox="0 0 31 16" className="h-4 w-[31px]" shapeRendering="crispEdges" aria-hidden="true">
            {[0, 1, 2, 3, 4, 5, 6, 7].map((i) => (
              <g key={i}><rect x={i * 4} y="0" width="3" height={11 - i} fill="#5a7800" /><rect x={i * 4} y={12 - i} width="3" height={4 + i} fill="#0a3d5c" /></g>
            ))}
          </svg>
          5775/6 kb
        </div>
      </footer>
    </div>
  );
}
